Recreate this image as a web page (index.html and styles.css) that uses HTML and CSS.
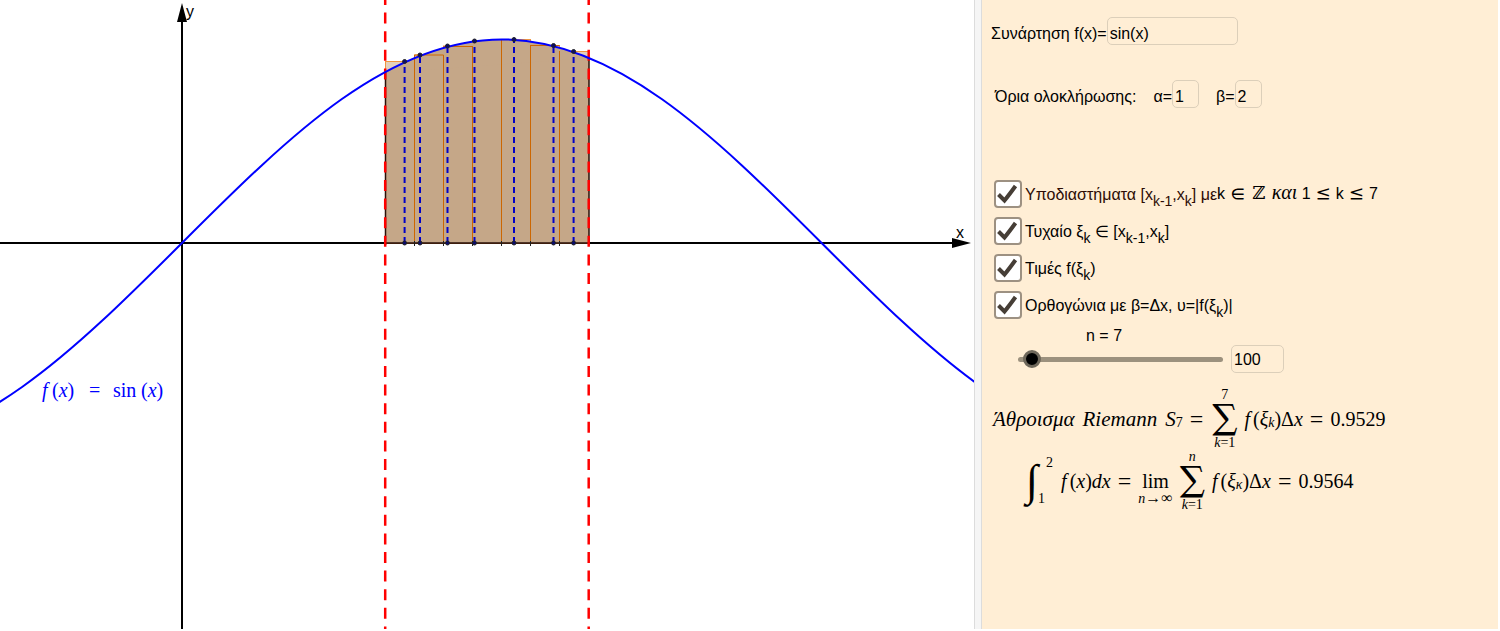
FILE: index.html
```html
<!DOCTYPE html>
<html lang="el">
<head>
    <meta charset="UTF-8">
    <meta name="viewport" content="width=device-width, initial-scale=1.0">
    <title>Άθροισμα Riemann</title>
    <link rel="stylesheet" href="styles.css">
</head>
<body>
    <main class="applet">
        <svg class="graph" viewBox="0 0 974 629" role="img" aria-label="f(x) = sin(x)">
            <defs>
                <path id="sine" d="M-137.8 446.6 C-84.5 446.6 -31.2 424.7 22.1 387 C75.4 349.3 128.7 296.3 182 243 C235.3 189.7 288.6 136.7 341.9 99 C395.2 61.3 448.5 39.4 501.8 39.4 C555.1 39.4 608.4 61.3 661.7 99 C715 136.7 768.3 189.7 821.6 243 C874.9 296.3 928.2 349.3 981.5 387"/>
                <clipPath id="bounds"><rect x="385.5" y="0" width="203.5" height="243"/></clipPath>
            </defs>

            <!-- axes -->
            <path class="axis" d="M0 243H955M182 629V18"/>
            <path d="M952 238L971 243L952 248ZM177 22L182 3L187 22Z"/>
            <text class="axis-label" x="956" y="238">x</text>
            <text class="axis-label" x="186" y="17">y</text>

            <!-- rectangles -->
            <g class="bars">
                <rect x="385.5" y="61.5" width="29" height="181.5"/>
                <rect x="414.5" y="55" width="29" height="188"/>
                <rect x="443.5" y="46" width="29" height="197"/>
                <rect x="472.5" y="41" width="29" height="202"/>
                <rect x="501.5" y="39.5" width="29" height="203.5"/>
                <rect x="530.5" y="45.5" width="29" height="197.5"/>
                <rect x="559.5" y="51.5" width="29" height="191.5"/>
            </g>
            <g clip-path="url(#bounds)">
                <use href="#sine" class="area"/>
                <path class="area" d="M385 73L590 58V243H385Z"/>
            </g>
            <path class="dividers" d="M414.5 55V243M443.5 55V243M472.5 46V243M501.5 40V243M530.5 45V243M559.5 51V243M414.5 55H443.5M443.5 46.5H472.5M530.5 45.5H559.5"/>
            <path class="edges" d="M385.5 71V245M589 58V245M385.5 243H589"/>
            <path class="ticks" d="M414.5 241V246M443.5 241V246M472.5 241V246M501.5 241V246M530.5 241V246M559.5 241V246"/>

            <!-- values f(ξk) -->
            <path class="values" d="M404.6 243V61.5M420 243V55M447.5 243V46M474.5 243V41M514 243V39.5M553.5 243V45.5M573.6 243V51.5"/>

            <path class="limits" d="M385.2 -6V629M588.7 -6V629"/>
            <use href="#sine" class="curve"/>
            <g class="points">
                <circle cx="404.6" cy="61.5" r="2"/>
                <circle cx="420" cy="55" r="2"/>
                <circle cx="447.5" cy="46" r="2"/>
                <circle cx="474.5" cy="41" r="2"/>
                <circle cx="514" cy="39.5" r="2"/>
                <circle cx="553.5" cy="45.5" r="2"/>
                <circle cx="573.6" cy="51.5" r="2"/>
                <circle cx="404.6" cy="243" r="2"/>
                <circle cx="420" cy="243" r="2"/>
                <circle cx="447.5" cy="243" r="2"/>
                <circle cx="474.5" cy="243" r="2"/>
                <circle cx="514" cy="243" r="2"/>
                <circle cx="553.5" cy="243" r="2"/>
                <circle cx="573.6" cy="243" r="2"/>
            </g>
            <text class="curve-label" y="397"><tspan class="var" x="42">f</tspan><tspan x="52">(</tspan><tspan class="var">x</tspan><tspan>)</tspan><tspan x="89">=</tspan><tspan x="113">sin</tspan><tspan x="141">(</tspan><tspan class="var">x</tspan><tspan>)</tspan></text>
        </svg>

        <div class="divider"></div>

        <form class="panel">
            <div class="row">
                <label for="fn">Συνάρτηση f(x)=</label>
                <input class="field field-fn" id="fn" type="text" value="sin(x)">
            </div>

            <div class="row row-limits">
                <span class="caption">Όρια ολοκλήρωσης:</span>
                <label for="from">α=</label>
                <input class="field field-limit" id="from" type="text" value="1">
                <label class="next" for="to">β=</label>
                <input class="field field-limit" id="to" type="text" value="2">
            </div>

            <div class="options">
                <div class="option">
                    <input type="checkbox" id="intervals" checked>
                    <label for="intervals"><span class="brown">Υποδιαστήματα [x<span class="idx">k-1</span>,x<span class="idx">k</span>] με</span></label>
                    <span class="range">k <span class="sym">∈</span> <span class="sym">ℤ</span> <i class="math">και</i> 1 <span class="sym">≤</span> k <span class="sym">≤</span> 7</span>
                </div>
                <div class="option">
                    <input type="checkbox" id="random" checked>
                    <label for="random">Τυχαίο ξ<span class="idx">k</span> ∈ [x<span class="idx">k-1</span>,x<span class="idx">k</span>]</label>
                </div>
                <div class="option">
                    <input type="checkbox" id="vals" checked>
                    <label for="vals">Τιμές f(ξ<span class="idx">k</span>)</label>
                </div>
                <div class="option">
                    <input type="checkbox" id="rects" checked>
                    <label for="rects">Ορθογώνια με β=Δx, υ=|f(ξ<span class="idx">k</span>)|</label>
                </div>
            </div>

            <label class="n-label" for="n">n = 7</label>
            <div class="row row-slider">
                <div class="slider"><input type="range" id="n" min="0" max="100" value="7"></div>
                <input class="field field-max" type="text" value="100" aria-label="n max">
            </div>

            <div class="formula">
                <span class="words"><i>Άθροισμα</i><i>Riemann</i><i>S</i></span><span class="small low">7</span>
                <span class="rel">=</span>
                <span class="op"><span class="small">7</span><span class="sigma">∑</span><span class="small"><i>k</i>=1</span></span>
                <span><i class="func">f</i>(<i>ξ</i></span><i class="small low">k</i><span>)Δ<i>x</i></span>
                <span class="rel">=</span>
                <span>0.9529</span>
            </div>
            <div class="formula formula-limit">
                <span class="integral">∫</span>
                <span class="integral-limits small"><span class="upper">2</span><span>1</span></span>
                <span><i class="func">f</i>(<i>x</i>)<i>dx</i></span>
                <span class="rel">=</span>
                <span class="op"><span class="small">&nbsp;</span><span class="lim">lim</span><span class="small"><i>n</i><span class="arrow">→∞</span></span></span>
                <span class="op"><i class="small">n</i><span class="sigma">∑</span><span class="small"><i>k</i>=1</span></span>
                <span><i class="func">f</i>(<i>ξ</i></span><i class="small low">κ</i><span>)Δ<i>x</i></span>
                <span class="rel">=</span>
                <span>0.9564</span>
            </div>
        </form>
    </main>
</body>
</html>
```
FILE: styles.css
```css
* {
    box-sizing: border-box;
}
body {
    margin: 0;
    padding-right: 2px;
    background: #fff;
    color: #000;
    font-family: "Liberation Sans", Arial, sans-serif;
    font-size: 16px;
}
.applet {
    display: grid;
    grid-template-columns: 974fr 8px 516fr;
}
.graph {
    display: block;
    width: 100%;
    height: auto;
}
.axis {
    stroke: #000;
    stroke-width: 2;
}
.axis-label {
    font-size: 16px;
}
.bars {
    fill: #e3d0bc;
    stroke: #f0953f;
}
.area {
    fill: #c5a788;
}
.dividers {
    fill: none;
    stroke: #cc6600;
}
.edges {
    stroke: #2a1008;
    stroke-width: 1.5;
}
.ticks {
    stroke: #222;
}
.values {
    stroke: #0000c8;
    stroke-width: 2;
    stroke-dasharray: 6 4;
}
.limits {
    stroke: #f00;
    stroke-width: 2.5;
    stroke-dasharray: 11 7.6;
}
.curve {
    fill: none;
    stroke: #00f;
    stroke-width: 2;
}
.points {
    fill: #0a0a6e;
    stroke: #222;
}
.curve-label {
    fill: #00f;
    font-family: "Liberation Serif", serif;
    font-size: 20px;
}
.var {
    font-style: italic;
}
.divider {
    background: #f5f5f5;
    border: 1px solid #dcdcdc;
    border-width: 0 1px;
}
.panel {
    background: #ffeed5;
    padding: 17px 0 0 9px;
}
.row {
    display: flex;
    align-items: center;
}
.row-limits {
    margin: 35px 0 72px;
    padding-left: 4px;
}
.caption {
    margin-right: 17px;
}
.next {
    margin-left: 17px;
}
.field {
    height: 28px;
    padding: 6px 2px 0;
    border: 1px solid #dccfba;
    border-radius: 5px;
    background: transparent;
    color: #000;
    font: inherit;
}
.field-fn {
    width: 131px;
}
.field-limit {
    width: 27px;
}
.field-max {
    width: 53px;
    padding-top: 2px;
}
.row label,
.caption {
    padding-top: 6px;
}
.options {
    display: grid;
    gap: 9px;
    padding-left: 3px;
}
.option {
    display: flex;
    align-items: center;
    height: 28px;
    line-height: 20px;
    white-space: nowrap;
}
.option label {
    padding-top: 2px;
}
.option input {
    appearance: none;
    flex: none;
    width: 28px;
    height: 28px;
    margin: 0 3px 0 0;
    border: 2px solid #9d9182;
    border-radius: 4px;
    background: #fff;
}
.option input:checked {
    background: #fff url("data:image/svg+xml,%3Csvg xmlns='http://www.w3.org/2000/svg' viewBox='0 0 24 24'%3E%3Cpath d='M2.500 12.500L8.500 18.500Q13 13 19.500 4' fill='none' stroke='%23463e36' stroke-width='4'/%3E%3C/svg%3E") center / 24px no-repeat;
}
.brown {
    color: #2d0c04;
}
.idx {
    font-size: 14px;
    line-height: 0;
    vertical-align: -6px;
}
.sym {
    margin: 0 1px;
    font-family: "DejaVu Math TeX Gyre", "DejaVu Serif", serif;
    font-size: 18px;
    line-height: 0;
}
.math {
    font-family: "Liberation Serif", serif;
    font-size: 20px;
    line-height: 0;
}
.n-label {
    display: block;
    margin: 8px 0 0 95px;
    line-height: 18px;
}
.row-slider {
    padding-left: 27px;
    gap: 8px;
}
.slider {
    display: grid;
    align-items: center;
    width: 205px;
}
.slider::before {
    content: "";
    grid-area: 1 / 1;
    height: 5px;
    border-radius: 3px;
    background: #9c917e;
}
.slider input {
    appearance: none;
    grid-area: 1 / 1;
    width: 223px;
    height: 18px;
    margin: 0 -9px;
    background: none;
}
.slider input::-webkit-slider-thumb {
    appearance: none;
    width: 18px;
    height: 18px;
    border: 3px solid #6f685b;
    border-radius: 50%;
    background: #000;
}
.formula {
    display: flex;
    align-items: center;
    height: 62px;
    margin: 15px 0 0 2px;
    font-family: "Liberation Serif", serif;
    font-size: 20px;
    white-space: nowrap;
}
.formula-limit {
    margin: 0 0 0 35px;
}
.words {
    display: flex;
    gap: 8px;
    font-size: 21px;
}
.func {
    margin-right: 3px;
}
.small {
    font-size: 14px;
    line-height: 14px;
}
.low {
    padding-top: 8px;
}
.rel {
    margin: 0 7px;
    font-size: 24px;
    line-height: 20px;
}
.op {
    display: flex;
    flex-direction: column;
    align-items: center;
    margin-right: 5px;
}
.sigma {
    font-family: "DejaVu Math TeX Gyre", "Liberation Serif", serif;
    font-size: 30px;
    line-height: 34px;
}
.lim {
    line-height: 20px;
}
.arrow {
    font-size: 16px;
}
.integral {
    font-family: "Liberation Serif", serif;
    font-size: 44px;
    line-height: 46px;
}
.integral-limits {
    display: flex;
    flex-direction: column;
    justify-content: space-between;
    height: 50px;
    margin-right: 8px;
}
.upper {
    padding-left: 8px;
}
```
